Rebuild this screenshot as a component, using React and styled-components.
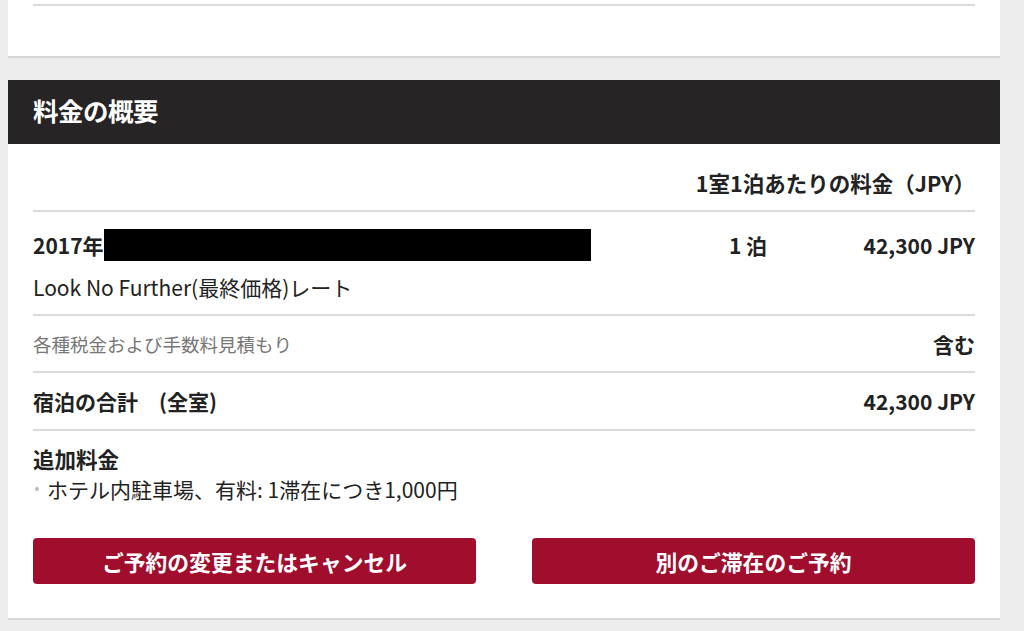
import styled, { createGlobalStyle } from 'styled-components'

const Global = createGlobalStyle`
  *, *::before, *::after {
    box-sizing: border-box;
  }
  body {
    margin: 0;
    background: #ededed;
    font-family: "Noto Sans CJK JP", "Noto Sans", sans-serif;
    color: #222;
  }
`

const Page = styled.div`
  padding: 0 24px 0 8px;
`

const Card = styled.section`
  background: #fff;
  border-bottom: 2px solid #d6d6d6;
  margin-bottom: 22px;
`

const TopCard = styled(Card)`
  height: 58px;
  padding: 4px 25px 0;
`

const Header = styled.h2`
  margin: 0;
  height: 64px;
  background: #262425;
  color: #fff;
  font-size: 25.5px;
  font-weight: 700;
  display: flex;
  align-items: center;
  padding: 0 25px 6px;
  letter-spacing: -0.5px;
`

const Body = styled.div`
  padding: 0 25px 34px;
`

const Divider = styled.hr`
  margin: 0;
  border: 0;
  border-top: 2px solid #dadada;
`

const Row = styled.div`
  display: grid;
  grid-template-columns: 1fr 100px 177px;
  align-items: ${(p) => (p.$top ? 'start' : 'center')};
  height: ${(p) => p.$h}px;
  border-bottom: 2px solid #dadada;
  font-size: 21px;
  line-height: 30px;
  font-weight: ${(p) => (p.$bold ? 700 : 400)};
`

const RateHead = styled.div`
  grid-column: 1 / 4;
  justify-self: end;
  align-self: start;
  font-weight: 700;
  font-size: 21.5px;
  padding-top: 24px;
`

const Cell = styled.div`
  color: ${(p) => p.$color || '#222'};
  font-size: ${(p) => p.$size || 21}px;
  font-weight: ${(p) => (p.$bold ? 700 : 'inherit')};
  text-align: ${(p) => p.$align || 'left'};
  line-height: ${(p) => (p.$top ? '34px' : 'inherit')};
  padding-top: ${(p) => (p.$top ? '16px' : '0')};
  white-space: nowrap;
`

const Stay = styled.div`
  display: flex;
  flex-direction: column;
  gap: 10px;
  padding-top: 16px;
`

const DateLine = styled.div`
  display: flex;
  align-items: center;
  height: 34px;
  font-weight: 700;
`

const Redacted = styled.span`
  display: inline-block;
  width: 487px;
  height: 32px;
  background: #000;
`

const Extra = styled.div`
  padding-top: 13px;
  display: flex;
  flex-direction: column;
  line-height: 30px;
`

const ExtraTitle = styled.div`
  font-weight: 700;
  font-size: 21.5px;
`

const Bullet = styled.div`
  font-size: 21px;
  display: flex;
  align-items: center;
  gap: 8px;

  &::before {
    content: '';
    width: 4px;
    height: 4px;
    margin-left: 2px;
    border-radius: 50%;
    background: #bbb;
  }
`

const Actions = styled.div`
  display: flex;
  justify-content: space-between;
  margin-top: 34px;
`

const Button = styled.button`
  width: 443px;
  height: 46px;
  background: #a00d2d;
  color: #fff;
  border: 0;
  border-radius: 4px;
  font-family: inherit;
  font-size: 21.8px;
  font-weight: 700;
  cursor: pointer;
`

export default function App() {
  return (
    <>
      <Global />
      <Page>
        <TopCard>
          <Divider />
        </TopCard>
        <Card>
          <Header>料金の概要</Header>
          <Body>
            <Row $h={68}>
              <RateHead>1室1泊あたりの料金（JPY）</RateHead>
            </Row>
            <Row $h={104} $top>
              <Stay>
                <DateLine>
                  2017年<Redacted />
                </DateLine>
                <div>Look No Further(最終価格)レート</div>
              </Stay>
              <Cell $bold $top $align="center">1 泊</Cell>
              <Cell $bold $top $align="right">42,300 JPY</Cell>
            </Row>
            <Row $h={57}>
              <Cell $color="#777" $size={18.5}>各種税金および手数料見積もり</Cell>
              <Cell />
              <Cell $bold $align="right">含む</Cell>
            </Row>
            <Row $h={58} $bold>
              <Cell>宿泊の合計　(全室)</Cell>
              <Cell />
              <Cell $align="right">42,300 JPY</Cell>
            </Row>
            <Extra>
              <ExtraTitle>追加料金</ExtraTitle>
              <Bullet>ホテル内駐車場、有料: 1滞在につき1,000円</Bullet>
            </Extra>
            <Actions>
              <Button>ご予約の変更またはキャンセル</Button>
              <Button>別のご滞在のご予約</Button>
            </Actions>
          </Body>
        </Card>
      </Page>
    </>
  )
}
